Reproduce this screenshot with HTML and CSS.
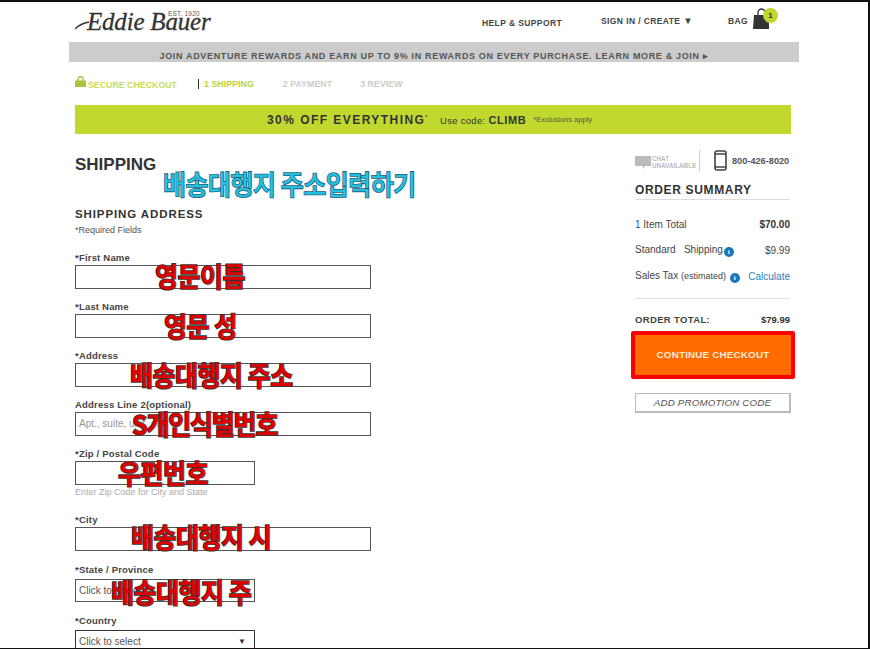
FILE: index.html
```html
<!DOCTYPE html>
<html lang="en">
<head>
<meta charset="utf-8">
<title>Eddie Bauer - Shipping</title>
<link rel="stylesheet" href="styles.css">
</head>
<body>
<div class="frame">
  <header class="header">
    <div class="logo">
      <svg class="logo-tail" width="137" height="20" viewBox="0 0 137 20"><path d="M0 18C4 14 8 12 14 11" fill="none" stroke="#333" stroke-width="1.300"/></svg>
      <span class="logo-name">Eddie Bauer</span><span class="logo-est">EST. 1920</span>
    </div>
    <nav class="nav">
      <span class="nav-help">HELP &amp; SUPPORT</span>
      <span class="nav-sign">SIGN IN / CREATE <span class="nav-arrow">▼</span></span>
      <span class="nav-bag">BAG</span>
      <span class="bag">
        <svg width="17" height="21" viewBox="0 0 17 21"><path d="M5 8V4.500a3.500 3.500 0 0 1 7 0V8" fill="none" stroke="#333" stroke-width="1.300"/><path d="M1 7h15v14H0z" fill="#333"/></svg>
        <span class="bag-count">1</span>
      </span>
    </nav>
  </header>
  <div class="promo">JOIN ADVENTURE REWARDS AND EARN UP TO 9% IN REWARDS ON EVERY PURCHASE. LEARN MORE &amp; JOIN ▸</div>
  <div class="steps">
    <span class="secure">
      <svg width="11" height="11" viewBox="0 0 11 11"><path d="M3 5V3.200a2.500 2.500 0 0 1 5 0V5" fill="none" stroke="#a9c23f" stroke-width="1.400"/><rect y="4.500" width="11" height="6.500" fill="#a9c23f"/></svg>
      <span class="secure-text">SECURE CHECKOUT</span>
    </span>
    <span class="step step-on">1 SHIPPING</span>
    <span class="step">2 PAYMENT</span>
    <span class="step">3 REVIEW</span>
  </div>
  <div class="banner">
    <span class="banner-main">30% OFF EVERYTHING<sup>*</sup></span>
    <span class="banner-code">Use code: <b>CLIMB</b></span>
    <span class="banner-note">*Exclusions apply</span>
  </div>
  <main class="main">
    <section class="form">
      <h1 class="title">SHIPPING</h1>
      <h2 class="subtitle">SHIPPING ADDRESS</h2>
      <p class="required">*Required Fields</p>
      <div class="field f-first"><label class="label">*First Name</label><div class="input"></div><span class="note n-first">영문이름</span></div>
      <div class="field"><label class="label">*Last Name</label><div class="input"></div><span class="note n-last">영문 성</span></div>
      <div class="field"><label class="label">*Address</label><div class="input"></div><span class="note n-addr">배송대행지 주소</span></div>
      <div class="field"><label class="label">Address Line 2(optional)</label><div class="input input-text hint-text">Apt., suite, unit, etc.</div><span class="note n-addr2">S개인식별번호</span></div>
      <div class="field"><label class="label">*Zip / Postal Code</label><div class="input short"></div><span class="note n-zip">우편번호</span><p class="hint">Enter Zip Code for City and State</p></div>
      <div class="field f-city"><label class="label">*City</label><div class="input"></div><span class="note n-city">배송대행지 시</span></div>
      <div class="field f-state"><label class="label">*State / Province</label><div class="input short input-text">Click to select</div><span class="note n-state">배송대행지 주</span></div>
      <div class="field f-country"><label class="label">*Country</label><div class="input short input-text select">Click to select<span class="caret">▼</span></div></div>
      <span class="note-blue">배송대행지 주소입력하기</span>
    </section>
    <aside class="side">
      <div class="contact">
        <svg class="chat-icon" width="16" height="14" viewBox="0 0 16 14"><path d="M0 0h16v10H10l-2 3.500V10H0z" fill="#bbb"/></svg>
        <span class="chat-text">CHAT<br>UNAVAILABLE</span>
        <svg class="phone-icon" width="13" height="21" viewBox="0 0 13 21"><rect x="1" y="1" width="11" height="19" rx="2" fill="#fff" stroke="#444" stroke-width="1.600"/><path d="M1 4h11M1 17h11" stroke="#444" stroke-width="1.400"/></svg>
        <span class="phone">800-426-8020</span>
      </div>
      <h2 class="sum-title">ORDER SUMMARY</h2>
      <div class="row r-item"><span><span class="count">1</span> Item Total</span><b>$70.00</b></div>
      <div class="row"><span>Standard &nbsp; Shipping<i class="info">i</i></span><span>$9.99</span></div>
      <div class="row r-tax"><span>Sales Tax <small>(estimated)</small> <i class="info">i</i></span><span class="calc">Calculate</span></div>
      <div class="row total"><span>ORDER TOTAL:</span><b>$79.99</b></div>
      <div class="checkout">CONTINUE CHECKOUT</div>
      <div class="promo-code">ADD PROMOTION CODE</div>
    </aside>
  </main>
</div>
</body>
</html>
```
FILE: styles.css
```css
* { box-sizing: border-box; }
html, body { margin: 0; padding: 0; }
body { font-family: "Liberation Sans", Arial, "Noto Sans CJK KR", sans-serif; color: #333; background: #fff; }
.frame { width: 870px; height: 649px; overflow: hidden; border-top: 2px solid #111; border-right: 2px solid #111; border-bottom: 1px solid #111; position: relative; }
.header { display: flex; justify-content: space-between; height: 40px; padding: 0 68px 0 75px; }
.logo { position: relative; width: 137px; height: 26px; margin-top: 7px; }
.logo-tail { position: absolute; left: 0; top: 2px; }
.logo-name { position: absolute; left: 12px; top: 0; font: italic 400 25px/26px "Liberation Serif", serif; color: #333; -webkit-text-stroke: 0.3px #333; white-space: nowrap; letter-spacing: -0.2px; }
.logo-est { position: absolute; left: 93px; top: 1px; font-size: 6.500px; line-height: 7px; color: #555; letter-spacing: 0.2px; white-space: nowrap; }
.nav { position: relative; width: 330px; font-size: 8.500px; font-weight: 700; color: #444; letter-spacing: 0.4px; white-space: nowrap; }
.nav-help { position: absolute; left: 12px; top: 16px; }
.nav-sign { position: absolute; left: 131px; top: 13px; }
.nav-arrow { font-size: 9.500px; letter-spacing: 0; }
.nav-bag { position: absolute; left: 258px; top: 14px; }
.bag { position: absolute; left: 283px; top: 6px; width: 26px; height: 22px; }
.bag svg { display: block; }
.bag-count { position: absolute; left: 10px; top: 0; width: 15px; height: 15px; border-radius: 50%; background: #bfd72f; font-size: 8px; line-height: 15px; text-align: center; color: #333; letter-spacing: 0; }
.promo { margin-left: 69px; width: 730px; height: 20px; background: #ccc; color: #555; font-size: 9px; font-weight: 700; line-height: 28px; text-align: center; letter-spacing: 0.66px; overflow: hidden; white-space: nowrap; }
.steps { display: flex; align-items: center; height: 43px; padding-left: 75px; font-size: 8.900px; font-weight: 700; white-space: nowrap; color: #ccc; }
.secure { display: flex; align-items: center; gap: 2px; color: #c6dc62; width: 123px; }
.secure svg { margin-top: -5px; }
.secure-text { margin-top: 2px; font-size: 8.800px; }
.step { margin-right: 28px; }
.step-on { color: #bcd338; border-left: 1px solid #333; padding-left: 5px; margin-right: 29px; }
.banner { display: flex; align-items: center; margin-left: 75px; width: 716px; height: 29px; background: #c1d82f; padding-left: 192px; white-space: nowrap; color: #333; }
.banner-main { font-size: 12px; font-weight: 700; letter-spacing: 1.450px; width: 173px; flex: none; }
.banner-main sup { font-size: 5px; vertical-align: 5px; line-height: 0; }
.banner-code { font-size: 9.500px; letter-spacing: 0.3px; }
.banner-code b { font-size: 11px; letter-spacing: 0.6px; }
.banner-note { font-size: 7.500px; margin-left: 7px; color: #555; }
.main { display: flex; padding-left: 75px; }
.form { width: 560px; position: relative; }
.title { margin: 22px 0 0; font-size: 17px; line-height: 18px; color: #333; font-weight: 700; }
.subtitle { margin: 33px 0 0; font-size: 11.500px; line-height: 14px; letter-spacing: 0.9px; font-weight: 700; color: #333; }
.required { margin: 4px 0 0; font-size: 9px; line-height: 10px; color: #555; }
.field { position: relative; margin-top: 12px; width: 296px; }
.f-first { margin-top: 17px; }
.label { display: block; font-size: 9.500px; line-height: 12px; font-weight: 700; color: #444; letter-spacing: 0.2px; white-space: nowrap; }
.input { height: 24px; width: 296px; border: 1px solid #555; background: #fff; margin-top: 1px; }
.input-text { font-size: 10px; line-height: 22px; padding-left: 3px; color: #555; white-space: nowrap; }
.hint-text { color: #999; }
.short { width: 180px; }
.hint { margin: 2px 0 0; font-size: 9px; line-height: 10px; color: #aaa; white-space: nowrap; }
.f-city { margin-top: 17px; }
.f-state { margin-top: 13px; }
.f-state .input { margin-top: 3px; height: 23px; }
.f-country { margin-top: 13px; }
.f-country .input { margin-top: 3px; border-color: #333; }
.select { position: relative; }
.caret { position: absolute; right: 8px; top: 0; font-size: 8px; color: #333; }
.note, .note-blue { position: absolute; font-family: "Noto Sans CJK KR", sans-serif; font-weight: 700; line-height: 30px; white-space: nowrap; paint-order: stroke fill; }
.note { color: #e00000; -webkit-text-stroke: 1.500px #333; font-size: 25px; top: 9px; letter-spacing: -0.5px; transform: scaleY(1.08); }
.n-first { left: 80px; top: 8px; }
.n-last { left: 89px; }
.n-addr { left: 55px; }
.n-addr2 { left: 57px; letter-spacing: -1.2px; }
.n-zip { left: 43px; }
.n-city { left: 56px; top: 7px; }
.n-state { left: 36px; top: 12px; }
.note-blue { left: 88px; top: 34px; color: #25c1dc; -webkit-text-stroke: 1.500px #1b5d80; font-weight: 500; font-size: 25px; letter-spacing: -0.5px; transform: scaleY(1.1); }
.side { width: 156px; font-size: 10px; color: #444; }
.contact { height: 21px; margin-top: 16px; display: flex; align-items: center; }
.chat-icon { flex: none; margin-top: 5px; }
.chat-text { flex: none; margin-left: 1px; font-size: 6.300px; line-height: 7px; color: #bbb; font-weight: 700; width: 48px; border-right: 1px solid #ccc; height: 21px; padding-top: 5px; white-space: nowrap; }
.phone-icon { flex: none; margin: 0 5px 0 14px; }
.phone { font-size: 9.200px; font-weight: 700; color: #555; white-space: nowrap; }
.sum-title { margin: 11px 0 0; font-size: 12px; line-height: 16px; letter-spacing: 0.65px; color: #333; font-weight: 700; border-bottom: 1px solid #ddd; height: 18px; width: 155px; white-space: nowrap; }
.row { display: flex; justify-content: space-between; align-items: center; height: 14px; margin-top: 12px; padding-right: 1px; white-space: nowrap; }
.row b { color: #333; }
.r-item { margin-top: 17px; }
.count { color: #3a3f9a; }
.info { display: inline-block; width: 10px; height: 10px; border-radius: 50%; background: #1b75bb; color: #fff; font: 700 7px/10px "Liberation Serif", serif; text-align: center; vertical-align: -1px; margin-left: 1px; }
.r-tax small { font-size: 9px; }
.calc { color: #2f7fc1; }
.total { margin-top: 29px; position: relative; font-size: 9.500px; font-weight: 700; }
.total::before { content: ""; position: absolute; left: 0; right: 1px; top: -14px; border-top: 1px solid #ddd; }
.total span { letter-spacing: 0.35px; }
.checkout { margin: 5px 0 0 -4px; width: 164px; height: 48px; background: #ff6b00; border: 4px solid #f00; border-radius: 2px; color: #f6ead8; font-size: 9.800px; font-weight: 700; line-height: 40px; text-align: center; letter-spacing: 0.2px; }
.promo-code { margin-top: 14px; width: 156px; height: 20px; border: 2px solid #bbb; border-width: 1px 2px 2px 1px; font-size: 9.800px; font-style: italic; line-height: 17px; text-align: center; color: #555; letter-spacing: 0.15px; white-space: nowrap; }
```
